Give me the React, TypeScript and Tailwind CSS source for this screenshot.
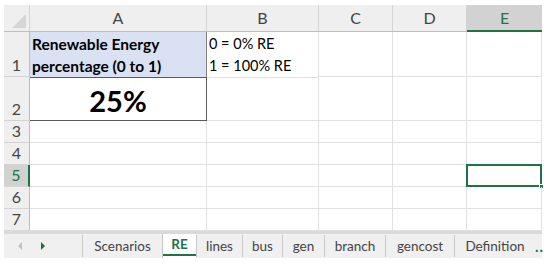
import React from "react";

const cols = [
  { key: "A", w: "w-[177px]" },
  { key: "B", w: "w-[112px]" },
  { key: "C", w: "w-[74px]" },
  { key: "D", w: "w-[74px]" },
  { key: "E", w: "w-[75px]" },
];

const rows = [
  { n: 1, h: "h-[45px]" },
  { n: 2, h: "h-[44px]" },
  { n: 3, h: "h-[22px]" },
  { n: 4, h: "h-[22px]" },
  { n: 5, h: "h-[22px]" },
  { n: 6, h: "h-[22px]" },
  { n: 7, h: "h-[22px]" },
];

const tabs = [
  { name: "Scenarios", w: "w-[80px]" },
  { name: "RE", w: "w-[34px]", active: true },
  { name: "lines", w: "w-[46px]" },
  { name: "bus", w: "w-[40px]" },
  { name: "gen", w: "w-[42px]" },
  { name: "branch", w: "w-[61px]" },
  { name: "gencost", w: "w-[69px]" },
  { name: "Definition", w: "w-[81px]" },
];

const Cell = ({ row, col }: { row: number; col: string }) => {
  const base = "relative border-r border-b border-[#e1e1e1] shrink-0";
  if (row === 1 && col === "A") {
    return (
      <div className={`${base} bg-[#d9e1f2] border-r-[#7f7f7f] border-b-[#5a5a5a] pl-[2px] pt-[1px] font-bold text-[15.5px] leading-[22px] text-black whitespace-nowrap`}>
        <div>Renewable Energy</div>
        <div>percentage (0 to 1)</div>
      </div>
    );
  }
  if (row === 1 && col === "B") {
    return (
      <div className={`${base} pl-[2px] pt-[1px] text-[14.5px] leading-[22px] text-black whitespace-nowrap`}>
        <div>0 = 0% RE</div>
        <div>1 = 100% RE</div>
      </div>
    );
  }
  if (row === 2 && col === "A") {
    return (
      <div className={`${base} border-r-[#5a5a5a] border-b-[#5a5a5a] flex items-end justify-center pb-[5px] font-bold text-[29px] leading-none text-black`}>
        25%
      </div>
    );
  }
  if (row === 5 && col === "E") {
    return (
      <div className={base}>
        <div className="absolute -left-[1px] -top-[1px] right-[-1px] bottom-[-1px] border-2 border-[#217346]" />
        <div className="absolute -right-[3px] -bottom-[3px] w-[5px] h-[5px] bg-[#217346] border border-white" />
      </div>
    );
  }
  return <div className={base} />;
};

export default function App() {
  return (
    <div className="w-[550px] h-[265px] bg-white pl-[4px] pt-[5px] overflow-hidden font-['Lato',sans-serif]">
      <div className="flex flex-col w-[538px]">
        {/* column headers */}
        <div className="flex h-[27px] bg-[#efefef] border-b border-[#bdbdbd]">
          <div className="relative w-[26px] shrink-0 border-r border-[#d4d4d4]">
            <div className="absolute right-[3px] bottom-[3px] w-0 h-0 border-l-[14px] border-l-transparent border-b-[14px] border-b-[#d6d6d6]" />
          </div>
          {cols.map((c) =>
            c.key === "E" ? (
              <div
                key={c.key}
                className={`${c.w} shrink-0 bg-[#d2d2d2] border-b-2 border-[#217346] -mb-[1px] flex items-center justify-center text-[16px] text-[#217346]`}
              >
                {c.key}
              </div>
            ) : (
              <div
                key={c.key}
                className={`${c.w} shrink-0 border-r border-[#d4d4d4] flex items-center justify-center text-[16px] text-[#444]`}
              >
                {c.key}
              </div>
            )
          )}
        </div>
        {/* rows */}
        {rows.map((r) => (
          <div key={r.n} className={`flex ${r.h}`}>
            <div
              className={`w-[26px] shrink-0 flex items-end justify-center pb-[1px] text-[16px] leading-[20px] border-b border-[#d4d4d4] ${
                r.n === 5
                  ? "bg-[#d2d2d2] text-[#217346] border-r-2 border-r-[#217346]"
                  : "bg-[#efefef] text-[#444] border-r border-r-[#bdbdbd]"
              }`}
            >
              {r.n}
            </div>
            {cols.map((c) => (
              <div key={c.key} className={`${c.w} shrink-0 flex flex-col [&>div]:flex-1`}>
                <Cell row={r.n} col={c.key} />
              </div>
            ))}
          </div>
        ))}
        {/* sheet tabs */}
        <div className="flex h-[28px] bg-[#f0f0f0] border-t-[4px] border-[#dadada] -mt-[1px]">
          <div className="w-[78px] shrink-0 flex items-center pl-[14px] gap-[19px]">
            <div className="w-0 h-0 border-y-[4px] border-y-transparent border-r-[4px] border-r-[#c2c2c2]" />
            <div className="w-0 h-0 border-y-[4px] border-y-transparent border-l-[4px] border-l-[#1e6b3c]" />
          </div>
          {tabs.map((t) =>
            t.active ? (
              <div
                key={t.name}
                className={`${t.w} shrink-0 bg-white border-l border-[#c8c8c8] flex flex-col`}
              >
                <div className="flex-1 flex items-center justify-center text-[13.5px] font-bold text-[#217346]">
                  {t.name}
                </div>
                <div className="h-[2px] bg-[#217346] mb-[2px]" />
              </div>
            ) : (
              <div
                key={t.name}
                className={`${t.w} shrink-0 border-l border-[#c8c8c8] my-[1px] flex items-center justify-center text-[13.5px] text-[#444]`}
              >
                {t.name}
              </div>
            )
          )}
          <div className="flex-1 flex items-center justify-end pr-[1px] text-[15px] font-bold text-[#217346] tracking-[1px]">
            ..
          </div>
        </div>
      </div>
    </div>
  );
}
